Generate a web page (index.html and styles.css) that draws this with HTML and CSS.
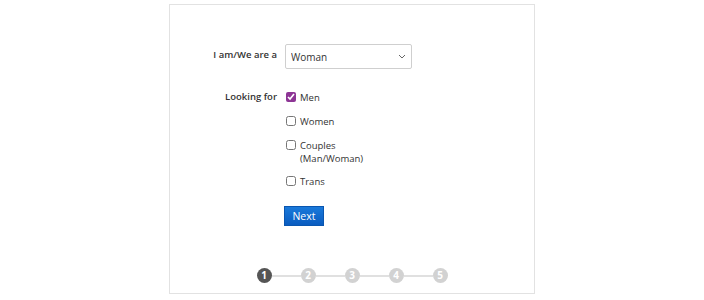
FILE: index.html
```html
<!DOCTYPE html>
<html lang="en">
<head>
    <meta charset="UTF-8">
    <title>Sign up</title>
    <link rel="stylesheet" href="styles.css">
</head>
<body>

<div class="card">
    <form class="form">
        <label class="label label-select" for="gender">I am/We are a</label>
        <div class="field">
            <select id="gender" class="select">
                <option>Woman</option>
                <option>Man</option>
                <option>Couple</option>
            </select>
        </div>

        <div class="label label-check">Looking for</div>
        <div class="field checks">
            <label class="check"><input type="checkbox" checked><span>Men</span></label>
            <label class="check"><input type="checkbox"><span>Women</span></label>
            <label class="check couples"><input type="checkbox"><span>Couples<br>(Man/Woman)</span></label>
            <label class="check"><input type="checkbox"><span>Trans</span></label>
        </div>

        <div></div>
        <div class="field">
            <button type="button" class="next">Next</button>
        </div>
    </form>

    <div class="steps">
        <span class="step active">1</span>
        <span class="line"></span>
        <span class="step">2</span>
        <span class="line"></span>
        <span class="step">3</span>
        <span class="line"></span>
        <span class="step">4</span>
        <span class="line"></span>
        <span class="step">5</span>
    </div>
</div>

</body>
</html>
```

FILE: styles.css
```css
body {
    font-family: 'Open Sans', 'Liberation Sans', sans-serif;
    background: #fff;
    color: #333;
    margin: 0;
    padding-top: 4px;
}
.card {
    width: 364px;
    margin: 0 auto;
    border: 1px solid #e2e2e2;
    padding: 39px 0 10px;
    box-sizing: content-box;
}
.form {
    display: grid;
    grid-template-columns: 107px 1fr;
    column-gap: 8px;
    row-gap: 0;
}
.label {
    text-align: right;
    font-size: 9.5px;
    font-weight: 600;
    color: #333;
}
.label-select {
    line-height: 22px;
}
.label-check {
    margin-top: 21px;
    line-height: 14px;
}
.field {
    font-size: 9.5px;
}
.select {
    width: 127px;
    height: 25px;
    border: 1px solid #cfcfcf;
    border-radius: 2px;
    background: #fff url("data:image/svg+xml,%3Csvg xmlns='http://www.w3.org/2000/svg' width='8' height='5'%3E%3Cpath d='M1 1l3 3 3-3' fill='none' stroke='%23666' stroke-width='1'/%3E%3C/svg%3E") no-repeat right 5px center;
    -webkit-appearance: none;
    appearance: none;
    font-family: inherit;
    font-size: 10px;
    color: #333;
    padding: 0 5px;
}
.checks {
    margin-top: 21px;
    display: flex;
    flex-direction: column;
    gap: 10px;
}
.check {
    display: flex;
    align-items: flex-start;
    min-height: 14px;
}
.check.couples {
    margin-bottom: -1px;
}
.check input {
    width: 10px;
    height: 10px;
    margin: 2px 4px 0 1px;
    accent-color: #8d3595;
}
.check span {
    line-height: 13px;
    padding-top: 1px;
}
.next {
    margin-top: 18px;
    margin-left: -1px;
    width: 40px;
    height: 20px;
    border: 1px solid #0a56b0;
    background: linear-gradient(#1a79da, #0a5cc0);
    color: #fff;
    font-family: inherit;
    font-size: 10.5px;
    padding: 0;
    cursor: pointer;
}
.steps {
    display: flex;
    align-items: center;
    justify-content: center;
    margin-top: 42px;
}
.step {
    width: 15px;
    height: 15px;
    border-radius: 50%;
    background: #d2d2d2;
    color: #fff;
    font-size: 10px;
    font-weight: 700;
    line-height: 15px;
    text-align: center;
}
.step.active {
    background: #555;
}
.line {
    width: 29px;
    height: 2px;
    background: #e0e0e0;
}
```
